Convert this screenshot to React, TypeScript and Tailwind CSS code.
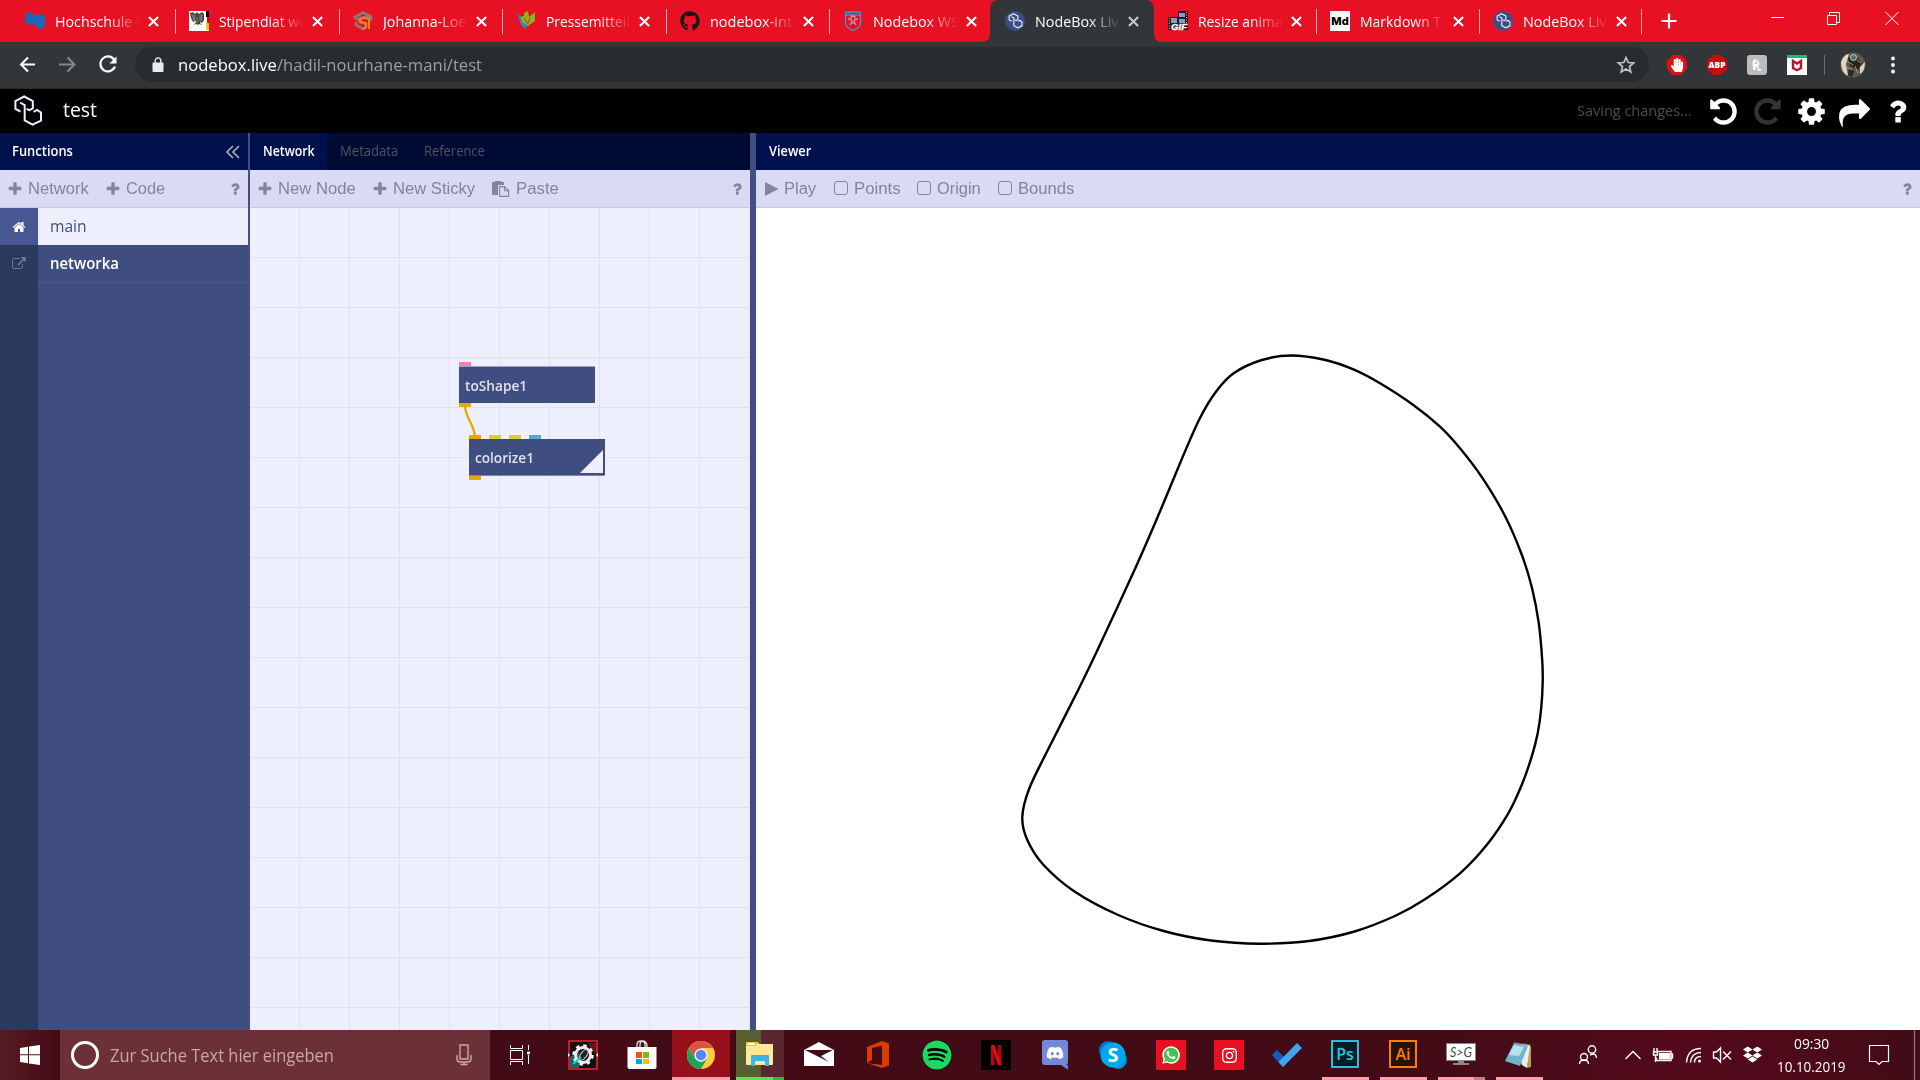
import React, { useLayoutEffect, useRef } from "react";
import { FaGithub, FaWhatsapp, FaInstagram, FaSpotify, FaDiscord, FaDropbox, FaHandPaper } from "react-icons/fa";

/* Text that is condensed or widened to fill a given width. */
function Fit({ w, className = "", children }: { w: number; className?: string; children: React.ReactNode }) {
  const ref = useRef<HTMLSpanElement>(null);
  useLayoutEffect(() => {
    const el = ref.current;
    if (el && el.offsetWidth) el.style.transform = `scaleX(${w / el.offsetWidth})`;
  }, [w]);
  return (
    <span className={`inline-block shrink-0 whitespace-nowrap text-left ${className}`} style={{ width: w }}>
      <span ref={ref} className="inline-block origin-left">{children}</span>
    </span>
  );
}

const glyphs = {
  undo: "M1664 896q0 156-61 298t-164 245-245 164-298 61q-172 0-327-72.5t-264-204.5q-7-10-6.5-22.5t8.5-20.5l137-138q10-9 25-9 16 2 23 12 73 95 179 147t225 52q104 0 198.5-40.5t163.5-109.5 109.5-163.5 40.5-198.5-40.5-198.5-109.5-163.5-163.5-109.5-198.5-40.5q-98 0-188 35.5t-160 101.5l137 138q31 30 14 69-17 40-59 40h-448q-26 0-45-19t-19-45v-448q0-42 40-59 39-17 69 14l130 129q107-101 244.5-156.5t284.5-55.5q156 0 298 61t245 164 164 245 61 298z",
  redo: "M1664 256v448q0 26-19 45t-45 19h-448q-42 0-59-40-17-39 14-69l138-138q-148-137-349-137-104 0-198.5 40.5t-163.5 109.5-109.5 163.5-40.5 198.5 40.5 198.5 109.5 163.5 163.5 109.5 198.5 40.5q119 0 225-52t179-147q7-10 23-12 15 0 25 9l137 138q9 8 9.5 20.5t-7.5 22.5q-109 132-264 204.5t-327 72.5q-156 0-298-61t-245-164-164-245-61-298 61-298 164-245 245-164 298-61q147 0 284.5 55.5t244.5 156.5l130-129q29-31 70-14 39 17 39 59z",
  cog: "M1152 896q0-106-75-181t-181-75-181 75-75 181 75 181 181 75 181-75 75-181zm512-109v222q0 12-8 23t-20 13l-185 28q-19 54-39 91 35 50 107 138 10 12 10 25t-9 23q-27 37-99 108t-94 71q-12 0-26-9l-138-108q-44 23-91 38-16 136-29 186-7 28-36 28h-222q-14 0-24.5-8.5t-11.5-21.5l-28-184q-49-16-90-37l-141 107q-10 9-25 9-14 0-25-11-126-114-165-168-7-10-7-23 0-12 8-23 15-21 51-66.5t54-70.5q-27-50-41-99l-183-27q-13-2-21-12.5t-8-23.5v-222q0-12 8-23t19-13l186-28q14-46 39-92-40-57-107-138-10-12-10-24 0-10 9-23 26-36 98.5-107.5t94.5-71.5q13 0 26 10l138 107q44-23 91-38 16-136 29-186 7-28 36-28h222q14 0 24.5 8.5t11.5 21.5l28 184q49 16 90 37l142-107q9-9 24-9 13 0 25 10 129 119 165 170 7 8 7 22 0 12-8 23-15 21-51 66.5t-54 70.5q26 50 41 98l183 28q13 2 21 12.5t8 23.5z",
  share: "M1792 640q0 26-19 45l-512 512q-19 19-45 19t-45-19-19-45v-256h-224q-98 0-175.5 6t-154 21.5-133 42.5-105.5 69.5-80 101-48.5 138.5-17.5 181q0 55 5 123 0 6 2.5 23.5t2.5 26.5q0 15-8.5 25t-23.5 10q-16 0-28-17-7-9-13-22t-13.5-30-10.5-24q-127-285-127-451 0-199 53-333 162-403 875-403h224v-256q0-26 19-45t45-19 45 19l512 512q19 19 19 45z",
  question: "M1088 1256v240q0 16-12 28t-28 12h-240q-16 0-28-12t-12-28v-240q0-16 12-28t28-12h240q16 0 28 12t12 28zm316-600q0 54-15.5 101t-35 76.5-55 59.5-57.5 43.5-61 35.5q-41 23-68.5 65t-27.5 67q0 17-12 32.5t-28 15.5h-240q-15 0-25.5-18.5t-10.5-37.5v-45q0-83 65-156.5t143-108.5q59-27 84-56t25-76q0-42-46.5-74t-107.5-32q-65 0-108 29-35 25-107 115-13 16-31 16-12 0-25-8l-164-125q-13-10-15.5-25t5.5-28q160-266 464-266 80 0 161 31t146 83 106 127.5 41 158.5z",
  plus: "M1600 736v192q0 40-28 68t-68 28h-416v416q0 40-28 68t-68 28h-192q-40 0-68-28t-28-68v-416h-416q-40 0-68-28t-28-68v-192q0-40 28-68t68-28h416v-416q0-40 28-68t68-28h192q40 0 68 28t28 68v416h416q40 0 68 28t28 68z",
  home: "M1472 992v480q0 26-19 45t-45 19h-384v-384h-256v384h-384q-26 0-45-19t-19-45v-480q0-1 .5-3t.5-3l575-474 575 474q1 2 1 6zm223-69l-62 74q-8 9-21 11h-3q-13 0-21-7l-692-577-692 577q-12 8-24 7-13-2-21-11l-62-74q-8-10-7-23.5t11-21.5l719-599q32-26 76-26t76 26l244 204v-195q0-14 9-23t23-9h192q14 0 23 9t9 23v408l219 182q10 8 11 21.5t-7 23.5z",
  external: "M1408 928v320q0 119-84.5 203.5t-203.5 84.5h-832q-119 0-203.5-84.5t-84.5-203.5v-832q0-119 84.5-203.5t203.5-84.5h704q14 0 23 9t9 23v64q0 14-9 23t-23 9h-704q-66 0-113 47t-47 113v832q0 66 47 113t113 47h832q66 0 113-47t47-113v-320q0-14 9-23t23-9h64q14 0 23 9t9 23zm384-864v512q0 26-19 45t-45 19-45-19l-176-176-652 652q-10 10-23 10t-23-10l-114-114q-10-10-10-23t10-23l652-652-176-176q-19-19-19-45t19-45 45-19h512q26 0 45 19t19 45z",
};

function Glyph({ name, className = "" }: { name: keyof typeof glyphs; className?: string }) {
  return (
    <svg viewBox="0 0 1792 1792" className={`shrink-0 ${className}`} fill="currentColor">
      <path d={glyphs[name]} />
    </svg>
  );
}

function NodeBoxMark({ className = "", width = 1.7 }: { className?: string; width?: number }) {
  return (
    <svg viewBox="0 0 30 32" className={className} fill="none" stroke="#eef" strokeWidth={width}>
      <path d="M7.500 16.500L2.400 14V6L11.200 1.500L19.800 6V13.500L16.500 15.200L13.500 13.800" />
      <path d="M7 7.500L11.700 10.200V25.500L19.500 29.700L28 25.600V17.500L24 15L20.500 17" />
    </svg>
  );
}

function NodeBoxIcon() {
  return (
    <div className="flex size-5 items-center justify-center rounded-full bg-[#3c4d86]">
      <NodeBoxMark className="h-4 w-[15px]" width={2.3} />
    </div>
  );
}

function Cross({ className = "text-white" }: { className?: string }) {
  return (
    <svg viewBox="0 0 11 11" className={`size-[11px] ${className}`} stroke="currentColor" strokeWidth="2.100">
      <path d="M.9.9l9.200 9.200M10.100.9L.9 10.100" />
    </svg>
  );
}

const favicons = {
  hochschule: (
    <svg viewBox="0 0 20 20" className="size-5" fill="#1b67b8">
      <path d="M0 3.500L4.500 1l5.500 3.500L16 2.500l4 2.500v10l-4.500 3.500-4-2v-3l-1.500-1v2l-3-1v-1l-2 1v1l-5-2.500z" />
    </svg>
  ),
  eagle: (
    <svg viewBox="0 0 20 20" className="size-5">
      <path fill="#fff" d="M0 0h20v20H0z" />
      <path d="M17 0h3v6h-3z" />
      <path fill="#d00" d="M18 6h2v6h-2z" />
      <path fill="#fc0" d="M17 12h3v7h-3z" />
      <path fill="#444" d="M1 2l3-1 2 2 2-2 2 2 3-2 2 2v6l-2 3-2-1v1l2 2-3-1-1 1-2-1-2 1 2-3v-1l-3 1-2-4z" />
      <path stroke="#bbb" strokeWidth=".6" d="M3 3l2 7M5.500 4v7M11 4v6M13 3l-1 7M8 6v6" />
    </svg>
  ),
  johanna: (
    <svg viewBox="0 0 20 20" className="size-5" fill="none" strokeWidth="2.600">
      <path stroke="#8d7b7b" d="M7 10L1.500 6.500 10 1.500l8 4v3L13 6 7 7v4l6 2v3l-3 2-7-4v-3" />
      <path stroke="#f58220" strokeWidth="2" d="M16 18V8l-5-1.500L7 9v2l6 1v4l-3 2" />
    </svg>
  ),
  press: (
    <svg viewBox="0 0 20 20" className="size-5">
      <path fill="#8db021" d="M3 6l5-1V2l4-2 1 6 6-5v9l-7 5-6-3z" />
      <path fill="#268bc4" d="M1 2l4 5 2 5 4 2-1 2 1 1-1 1-5-4z" />
      <path stroke="#d0331c" d="M8 7l4 6M14 7l-2 5" />
    </svg>
  ),
  github: <FaGithub className="size-5 text-[#1c1517]" />,
  shield: (
    <svg viewBox="0 0 20 20" className="size-5" fill="none" stroke="#4a90c8" strokeWidth="1.300">
      <path d="M2.500 1.500q7.500-1 15 0v10q0 5-7.500 8-7.500-3-7.500-8zM3 4h14" />
      <path stroke="#b9a1b5" d="M8 6q2-2 4 0v3l-1 1 2 4M8 6v3l1 1-2 4M5 8h2M13 8h2M9 12h2" />
    </svg>
  ),
  nodebox: <NodeBoxIcon />,
  gif: (
    <svg viewBox="0 0 20 20" className="size-5">
      <path fill="#301419" d="M0 6h10V0h10v19H0z" />
      <path fill="#7c9fd0" d="M3 7h6v5H3zM11 2h6v4h-6zM11 8h6v4h-6z" />
      <path stroke="#c9b3b3" strokeDasharray="1 1.500" d="M1.500 7v12M18.500 1v12" />
      <text x="3" y="18.500" textLength="16" lengthAdjust="spacingAndGlyphs" fontSize="8.500" fontWeight="900" fontStyle="italic" fill="#fff" stroke="#fff" strokeWidth=".4" fontFamily="Liberation Sans">GIF</text>
    </svg>
  ),
  md: <div className="flex size-5 items-center justify-center bg-white font-['Inter'] text-[11px] font-extrabold text-black">Md</div>,
};

const tabs: { icon: keyof typeof favicons; title: string; w: number; size: string; active?: boolean; sep?: boolean }[] = [
  { icon: "hochschule", title: "Hochschule M", w: 94, size: "w-[164px]", sep: true },
  { icon: "eagle", title: "Stipendiat we", w: 88, size: "w-[164px]", sep: true },
  { icon: "johanna", title: "Johanna-Loe", w: 83, size: "w-[163px]", sep: true },
  { icon: "press", title: "Pressemitteil", w: 84, size: "w-[164px]", sep: true },
  { icon: "github", title: "nodebox-int", w: 82, size: "w-[163px]", sep: true },
  { icon: "shield", title: "Nodebox WS", w: 86, size: "w-[162px]" },
  { icon: "nodebox", title: "NodeBox Liv", w: 84, size: "w-[163px]", active: true },
  { icon: "gif", title: "Resize anima", w: 85, size: "w-[162px]", sep: true },
  { icon: "md", title: "Markdown T", w: 81, size: "w-[163px]", sep: true },
  { icon: "nodebox", title: "NodeBox Liv", w: 84, size: "w-[162px]", sep: true },
];

function TabStrip() {
  return (
    <div className="flex h-[42px] bg-[#e81123] pl-[11px] text-white">
      {tabs.map((t, i) => (
        <div key={i} className={`relative flex shrink-0 items-center pl-[14px] ${t.size}`}>
          {t.active && (
            <svg viewBox="0 0 181 42" className="absolute -left-[10px] top-0 h-[42px] w-[181px]" fill="#323639">
              <path d="M0 42q9 0 9-8V9q0-9 9-9h146q9 0 9 9v25q0 8 8 8z" />
            </svg>
          )}
          <div className="relative flex items-center">
            {favicons[t.icon]}
            <div className="ml-[10px] w-[85px] overflow-hidden [mask-image:linear-gradient(to_right,#000_62%,transparent)]">
              <Fit w={t.w} className="text-[15px] leading-5">{t.title}</Fit>
            </div>
            <div className="ml-2"><Cross className={t.active ? "text-[#c6c8ca]" : "text-white"} /></div>
          </div>
          {t.sep && <div className="absolute -right-px top-[9px] h-[25px] w-px bg-[#f9b0b6]" />}
        </div>
      ))}
      <svg viewBox="0 0 280 42" className="h-[42px] w-[280px] shrink-0" fill="none" stroke="#fff">
        <path strokeWidth="2.200" d="M20.500 21h15M28 13.500v15" />
        <path d="M130 17.500h13M186.500 15.500h9v9h-9zM188.500 15v-2.500h10v10H196M244.500 12l13 13M257.500 12l-13 13" />
      </svg>
    </div>
  );
}

function AddressBar() {
  return (
    <div className="flex h-[47px] items-center border-b border-[#26292b] bg-[#323639] pb-px">
      <svg viewBox="0 0 135 46" className="h-[46px] w-[135px] shrink-0" fill="none" strokeWidth="2">
        <path stroke="#fff" d="M35 22.500H21M28 15.500l-7 7 7 7" />
        <path stroke="#84878a" d="M59 22.500h15M67.500 15.500l7 7-7 7" />
        <path stroke="#fff" strokeWidth="2.200" d="M114 17.500a7.500 7.500 0 1 0 1 7" />
        <path fill="#fff" d="M116.500 14.500v7h-7z" />
      </svg>
      <div className="flex h-[35px] w-[1514px] shrink-0 items-center rounded-full bg-[#282c2f] pl-[17px] pr-[13px]">
        <svg viewBox="0 0 12 16" className="h-4 w-3" fill="#e8eaed">
          <path d="M1.500 5.500h9q1 0 1 1V14q0 1-1 1h-9q-1 0-1-1V6.500q0-1 1-1z" />
          <path d="M3.200 6V3.700a2.800 2.800 0 0 1 5.600 0V6" fill="none" stroke="#e8eaed" strokeWidth="1.400" />
        </svg>
        <Fit w={304} className="ml-[14px] text-[17px] leading-6 text-[#9aa0a6]"><span className="text-white">nodebox.live</span>/hadil-nourhane-mani/test</Fit>
        <svg viewBox="0 0 20 20" className="ml-auto size-5" fill="none" stroke="#c0c3c6" strokeWidth="1.700">
          <path d="M10 2.500l2.200 5 5.500.5-4.200 3.600 1.300 5.400-4.800-2.900L5.200 17l1.300-5.400L2.300 8l5.500-.5z" />
        </svg>
      </div>
      <div className="flex items-center gap-5 pl-[18px]">
        <svg viewBox="0 0 20 20" className="size-5"><path fill="#e01010" d="M6 0h8l6 6v8l-6 6H6l-6-6V6z" /><foreignObject x="3" y="3" width="14" height="14"><FaHandPaper className="size-[14px] text-white" /></foreignObject></svg>
        <svg viewBox="0 0 20 20" className="size-5"><path fill="#c70d0d" d="M6 0h8l6 6v8l-6 6H6l-6-6V6z" /><text x="10" y="13.400" textAnchor="middle" textLength="17" lengthAdjust="spacingAndGlyphs" fontSize="9" fontWeight="800" fill="#fff" fontFamily="Open Sans">ABP</text></svg>
        <svg viewBox="0 0 20 20" className="size-5"><rect width="20" height="20" rx="3" fill="#bdbdbd" /><path d="M5.500 8q3.500-.5 3-3-2-.5-2 3l.5 7M5.500 10.500l7-1.500M7.500 15q1-5 3-4.500 1 .500.5 3 0 2.500 3 1M10.500 5l.5 5" fill="none" stroke="#fff" strokeWidth="1.500" /></svg>
        <svg viewBox="0 0 20 20" className="size-5"><path fill="#fff" d="M0 1h20v19H0z" /><path fill="#15c26b" d="M0 0h20v3H0z" /><path fill="none" stroke="#b3162a" strokeWidth="2.400" d="M6 6v7l4 2.200 4-2.200V6l-4 2.500z" /></svg>
      </div>
      <div className="ml-[17px] h-5 w-px bg-[#6c6f72]" />
      <svg viewBox="0 0 26 26" className="ml-[15px] size-[26px]">
        <circle cx="13" cy="13" r="12.500" fill="#61594c" />
        <path fill="#ddd5c5" d="M1 10q3-8 8-8L6 12l2 12Q1 21 1 10zM20 15l5-5q0 9-5 12z" />
        <path fill="#28241f" d="M8 6l7-3 7 8-4 7-8-4zM9 16l5 3-2 6-4-2z" />
        <circle cx="13.500" cy="5.500" r="3" fill="#40776f" stroke="#ccc" />
        <path stroke="#a99b83" d="M5 14l7 4M15 14l3 7M7 9l6 4M17 8l4 3" />
      </svg>
      <svg viewBox="0 0 4 18" className="ml-[25px] h-[18px] w-1" fill="#fff"><circle cx="2" cy="2.500" r="1.900" /><circle cx="2" cy="9" r="1.900" /><circle cx="2" cy="15.500" r="1.900" /></svg>
    </div>
  );
}

function AppHeader() {
  return (
    <div className="flex h-11 items-center bg-black pl-[13px]">
      <NodeBoxMark className="h-8 w-[30px]" width={2} />
      <Fit w={34} className="mb-[2px] ml-5 text-[20px] font-medium leading-7 text-white">test</Fit>
      <div className="ml-auto flex items-center pr-[7px] text-white">
        <Fit w={115} className="mb-[2px] mr-4 text-[15px] font-medium leading-5 text-[#4c4c4c]">Saving changes...</Fit>
        <Glyph name="undo" className="size-[31px]" />
        <Glyph name="redo" className="ml-[13px] size-[31px] text-[#333]" />
        <Glyph name="cog" className="ml-[13px] size-[31px]" />
        <Glyph name="share" className="ml-[12px] mt-1 size-[31px]" />
        <Glyph name="question" className="ml-[12px] size-[31px]" />
      </div>
    </div>
  );
}

const header = "flex h-[37px] shrink-0 items-center font-semibold text-[14px] leading-5 text-white";
const toolbar = "flex h-[38px] shrink-0 items-center border-b border-[#c8c5ec] bg-[#dadaf4] font-['Liberation_Sans'] text-[16px] leading-5 text-[#8283a0]";

function ToolButton({ label, w, className = "" }: { label: string; w: number; className?: string }) {
  return (
    <div className={`flex items-center ${className}`}>
      <Glyph name="plus" className="mr-[5px] size-4" />
      <Fit w={w}>{label}</Fit>
    </div>
  );
}

function FunctionsPanel() {
  return (
    <section className="flex w-[248px] shrink-0 flex-col">
      <div className={`${header} justify-between bg-[#00114d] pl-[12px] pr-[8px]`}>
        <Fit w={61} className="mb-[2px]">Functions</Fit>
        <svg viewBox="0 0 14 14" className="size-[14px]" fill="none" stroke="#a9a9b4" strokeWidth="1.700"><path d="M7 1L1 7l6 6M13 1L7 7l6 6" /></svg>
      </div>
      <div className={`${toolbar} pl-[7px]`}>
        <ToolButton label="Network" w={61} />
        <ToolButton label="Code" w={39} className="ml-4" />
        <Glyph name="question" className="ml-auto mr-[5px] size-4" />
      </div>
      <div className="flex flex-1 bg-[#404d80]">
        <div className="flex w-[38px] flex-col bg-[#2c395f] text-white">
          <div className="flex h-[37px] items-center justify-center bg-[#475792]"><Glyph name="home" className="size-[14px]" /></div>
          <div className="flex h-[37px] items-center justify-center text-[#6b7596]"><Glyph name="external" className="size-[14px]" /></div>
        </div>
        <div className="flex-1 text-[16px] leading-6">
          <div className="flex h-[37px] items-center bg-[#edf0fc] pb-[2px] pl-[12px] text-[#404d80]"><Fit w={37}>main</Fit></div>
          <div className="flex h-[38px] items-center border-b border-[#475792] pb-[2px] pl-[12px] font-semibold text-white"><Fit w={69}>networka</Fit></div>
        </div>
      </div>
    </section>
  );
}

function Port({ className }: { className: string }) {
  return <div className={`absolute h-1 w-3 ${className}`} />;
}

function NetworkPanel() {
  return (
    <section className="flex w-[500px] shrink-0 flex-col">
      <div className={`${header} bg-[#000b33]`}>
        <div className="flex h-full w-[77px] items-center bg-[#00114d] pb-[2px] pl-[13px]"><Fit w={52}>Network</Fit></div>
        <Fit w={58} className="mb-[2px] ml-[13px] font-normal text-[#50535f]">Metadata</Fit>
        <Fit w={61} className="mb-[2px] ml-[26px] font-normal text-[#50535f]">Reference</Fit>
      </div>
      <div className={`${toolbar} pl-[7px]`}>
        <ToolButton label="New Node" w={78} />
        <ToolButton label="New Sticky" w={82} className="ml-4" />
        <svg viewBox="0 0 18 16" className="ml-[17px] mr-[6px] h-4 w-[18px]" fill="currentColor">
          <path d="M0 1h3V0h6v1h3v3H6v10H0z" />
          <path d="M7.600 5.600h5l4 4v5.800h-9zM12.500 6v3.800h4" fill="#dadaf4" stroke="currentColor" strokeWidth="1.100" />
        </svg>
        <Fit w={43}>Paste</Fit>
        <Glyph name="question" className="ml-auto mr-[5px] size-4" />
      </div>
      <div className="relative flex-1 bg-[#edf0fc] bg-[linear-gradient(to_right,transparent_49px,#dfe2ee_49px),linear-gradient(to_bottom,transparent_49px,#dfe2ee_49px)] bg-[size:50px_50px]">
        <div className="absolute left-[209px] top-[158px] flex h-[37px] w-[136px] items-center border-t border-[#9ba2c2] bg-[#404d80] pl-[6px] text-[15px] font-semibold leading-5 text-[#e0e3ec]">
          <Fit w={62}>toShape1</Fit>
          <Port className="-top-[5px] left-0 bg-[#f17fb2]" />
          <Port className="-bottom-1 left-0 bg-[#e8a900]" />
        </div>
        <div className="absolute left-[219px] top-[231px] flex h-[37px] w-[136px] items-center border-b border-[#7a83a9] bg-[#404d80] pl-[6px] text-[15px] font-semibold leading-5 text-[#e0e3ec]">
          <Fit w={59}>colorize1</Fit>
          <Port className="-top-1 left-0 bg-[#e8a900]" />
          <Port className="-top-1 left-5 bg-[#dccb3c]" />
          <Port className="-top-1 left-10 bg-[#dccb3c]" />
          <Port className="-top-1 left-[60px] bg-[#5aa5df]" />
          <Port className="-bottom-[5px] left-0 bg-[#e8a900]" />
          <svg viewBox="0 0 23 23" className="absolute bottom-[2px] right-[2px] size-[23px]"><path fill="#edf0fc" d="M23 0v23H0z" /></svg>
        </div>
        <svg viewBox="0 0 20 34" className="absolute left-[210px] top-[197px] h-[34px] w-5" fill="none" stroke="#e8a900" strokeWidth="2.400"><path d="M5 0C5 14 15 19 15 33" /></svg>
      </div>
    </section>
  );
}

/* Outline vertices in window coordinates, in drawing order. */
const outline: [number, number][] = [
  [1291, 355.5], [1261.8, 360], [1234, 373], [1216.5, 391], [1200, 418], [1181.8, 459], [1158.9, 514], [1134.500, 570], [1097.500, 650],
  [1078.2, 690], [1047.3, 751], [1029.1, 789], [1022.3, 817], [1027.3, 840], [1043.6, 865], [1074.5, 891.5], [1118.2, 915], [1163.6, 931],
  [1210.9, 940.5], [1260, 943.7], [1309.1, 941], [1354.5, 931.5], [1396, 915.500], [1425, 899.3], [1460, 873.3], [1486.7, 845], [1508.3, 813.3],
  [1521.7, 785], [1531.7, 756.7], [1537.7, 733.3], [1541.2, 708.3], [1542.7, 681.7], [1542.2, 660], [1538.8, 623.3], [1532, 588],
  [1521.7, 554.5], [1505, 516], [1482.2, 477.7], [1460, 448.3], [1440, 426.7], [1413.3, 405], [1380, 383.3], [1354, 369.700], [1325.5, 360],
];

function smoothPath(pts: [number, number][]) {
  const n = pts.length;
  let d = `M${pts[0][0]} ${pts[0][1]}`;
  for (let i = 0; i < n; i++) {
    const a = pts[(i + n - 1) % n], b = pts[i], c = pts[(i + 1) % n], e = pts[(i + 2) % n];
    d += `C${b[0] + (c[0] - a[0]) / 6} ${b[1] + (c[1] - a[1]) / 6} ${c[0] - (e[0] - b[0]) / 6} ${c[1] - (e[1] - b[1]) / 6} ${c[0]} ${c[1]}`;
  }
  return d + "Z";
}

function Check({ label, w, className = "" }: { label: string; w: number; className?: string }) {
  return (
    <div className={`flex items-center ${className}`}>
      <div className="mb-px mr-[6px] size-[14px] rounded-[3px] border border-[#8283a0]" />
      <Fit w={w}>{label}</Fit>
    </div>
  );
}

function ViewerPanel() {
  return (
    <section className="flex flex-1 flex-col">
      <div className={`${header} bg-[#00114d] pl-[13px]`}><Fit w={42} className="mb-[2px]">Viewer</Fit></div>
      <div className={`${toolbar} pl-[9px]`}>
        <svg viewBox="0 0 14 14" className="mr-[5px] size-[14px]" fill="currentColor"><path d="M0 0l13.500 7L0 14z" /></svg>
        <Fit w={32}>Play</Fit>
        <Check label="Points" w={46} className="ml-[18px]" />
        <Check label="Origin" w={44} className="ml-[17px]" />
        <Check label="Bounds" w={56} className="ml-[17px]" />
        <Glyph name="question" className="ml-auto mr-[5px] size-4" />
      </div>
      <div className="flex-1 bg-white">
        <svg viewBox="756 208 1164 822" className="h-[822px] w-[1164px]" fill="none" stroke="#000" strokeWidth="2.400"><path d={smoothPath(outline)} /></svg>
      </div>
    </section>
  );
}

const apps: { slot: string; on?: boolean; art: React.ReactNode }[] = [
  { slot: "w-[58px]", art: (
    <svg viewBox="0 0 30 30" className="size-[30px]">
      <path fill="#111" stroke="#c61b2c" strokeWidth="2" d="M1 1h28v28H1z" />
      <path d="M2 17l9-5v16H2z" fill="#0f8f88" opacity=".7" />
      <path d="M19 3h9v12z" fill="#8f1420" opacity=".7" />
      <circle cx="15" cy="15" r="7.500" fill="none" stroke="#f4e6e6" strokeWidth="3" />
      <circle cx="15" cy="15" r="9.500" fill="none" stroke="#fff" strokeWidth="2.500" strokeDasharray="3.500 3.960" />
      <ellipse cx="15.500" cy="14.500" rx="3" ry="6" transform="rotate(35 15 15)" fill="#222" stroke="#ddd" />
      <path stroke="#1bd0c0" strokeWidth="2" d="M5 24l8-7" />
      <path fill="#fff" d="M0 13l2 2-2 2zM30 13l-2 2 2 2z" />
    </svg>) },
  { slot: "w-[60px]", art: (
    <svg viewBox="0 0 30 30" className="size-[30px]">
      <path d="M10 8V5q0-4 4-4t4 4v3M13 8V5q0-4 3-4t4 4v3" fill="none" stroke="#ddd" strokeWidth="1.400" />
      <path fill="#fff" d="M.5 7h29v20q0 2-2 2h-25q-2 0-2-2z" />
      <path fill="#f25022" d="M9 12h6v6H9z" /><path fill="#7fba00" d="M16 12h6v6h-6z" /><path fill="#00a4ef" d="M9 19h6v5H9z" /><path fill="#ffb900" d="M16 19h6v5h-6z" />
    </svg>) },
  { slot: "w-[58px] bg-[#970f1b]", art: (
    <svg viewBox="0 0 28 28" className="size-7">
      <circle cx="14" cy="14" r="14" fill="#ffcd40" />
      <path fill="#de5145" d="M1.900 7A14 14 0 0 1 26.100 7H14l-6 10.500z" />
      <path fill="#1aa260" d="M1.900 7A14 14 0 0 0 14 28l6-10.500-6 3.500-6-3.500z" />
      <circle cx="14" cy="14" r="6.600" fill="#f1f1f1" /><circle cx="14" cy="14" r="5.200" fill="#4c8bf5" />
    </svg>) },
  { slot: "w-[60px]", art: (
    <div className="flex h-full w-12 items-center justify-center bg-[linear-gradient(to_right,#575f30_25px,#5a262f_25px)]">
      <svg viewBox="0 0 28 24" className="mb-[2px] h-6 w-7">
        <path fill="#f5c430" d="M0 0h12l2 3h13v19H0z" /><path fill="#fff" d="M2 1h7v2H2z" /><path fill="#ffe896" d="M0 4h9l3-2h15v20q0 1-1 1H1q-1 0-1-1z" />
        <path fill="#3eb3e6" d="M5 24V14q0-1 1-1h16q1 0 1 1v10h-4v-5H9v5z" />
      </svg>
    </div>) },
  { slot: "w-[58px]", art: (
    <svg viewBox="0 0 30 24" className="mb-[2px] h-6 w-[30px]"><path fill="#fff" d="M0 8L15 0l15 8v16H0z" /><path fill="#430b16" d="M1 8h28l-12 6 8 6z" /></svg>) },
  { slot: "w-[59px]", art: (
    <svg viewBox="0 0 24 28" className="h-7 w-6"><path fill="#dc3c00" fillRule="evenodd" d="M1 6L16 0l7 2.500v22L16 27 1 22l15 2V4.500L6 7v12l-5 3z" /></svg>) },
  { slot: "w-[59px]", art: <div className="rounded-full bg-black"><FaSpotify className="size-[30px] text-[#1ed760]" /></div> },
  { slot: "w-[60px]", art: (
    <svg viewBox="0 0 30 30" className="size-[30px]"><path d="M0 0h30v30H0z" /><path fill="#b1060f" d="M10 5h3.500v20L10 25.500zM17 5h3.500v20.500L17 25z" /><path fill="#e50914" d="M10 5h3.500l7 20.500L17 25z" /></svg>) },
  { slot: "w-[58px]", art: (
    <div className="relative flex h-[30px] w-[26px] flex-col">
      <div className="flex h-[26px] items-center justify-center rounded-[3px] bg-[#7289da]"><FaDiscord className="size-[18px] text-white" /></div>
      <svg viewBox="0 0 8 5" className="ml-auto h-[5px] w-2"><path fill="#7289da" d="M1 0h7v5z" /></svg>
    </div>) },
  { slot: "w-[58px]", art: (
    <svg viewBox="0 0 28 28" className="size-7"><circle cx="9" cy="9" r="9" fill="#0078d4" /><circle cx="19" cy="19" r="9" fill="#0091e0" /><circle cx="14" cy="14" r="12.500" fill="#00a9ee" /><text x="14" y="21" textAnchor="middle" fill="#fff" fontSize="20" fontWeight="700" fontFamily="Open Sans">S</text></svg>) },
  { slot: "w-[58px]", art: <div className="flex size-[30px] items-center justify-center bg-[#e81123]"><div className="flex size-[17px] items-center justify-center rounded-full bg-[#40c351]"><FaWhatsapp className="size-[20px] shrink-0 text-white" /></div></div> },
  { slot: "w-[58px]", art: <div className="flex size-[30px] items-center justify-center bg-[#e81123]"><FaInstagram className="size-[17px] text-white" /></div> },
  { slot: "w-[58px]", art: (
    <svg viewBox="0 0 30 24" className="h-6 w-[30px]"><path fill="#185abd" d="M0 12l5-5 11 11-5 6z" /><path fill="#41a5ee" d="M11 24l-4.500-5L25 0l5 5z" /></svg>) },
  { slot: "w-[58px]", on: true, art: <div className="mb-[3px] flex size-7 items-center justify-center border-2 border-[#26c2d9] bg-[#001d26] text-[16px] font-semibold leading-none text-[#26c9e0]">Ps</div> },
  { slot: "w-[58px]", on: true, art: <div className="mb-[3px] flex size-7 items-center justify-center border-2 border-[#ff7c00] bg-[#261300] text-[16px] font-semibold leading-none text-[#ff7c00]">Ai</div> },
  { slot: "w-[58px]", on: true, art: (
    <svg viewBox="0 0 30 24" className="mb-[2px] h-6 w-[30px]"><path fill="#fff" stroke="#888" d="M.5 1.500h29v17H.5z" /><path fill="#888" d="M12 19h6v2h5v2H7v-2h5z" /><text x="15" y="14.500" textAnchor="middle" textLength="22" lengthAdjust="spacingAndGlyphs" fontSize="12.500" fontStyle="italic" fill="#444" fontFamily="Lato">S&gt;G</text></svg>) },
  { slot: "w-[58px]", on: true, art: (
    <svg viewBox="0 0 28 28" className="size-7"><path fill="#c59b45" d="M24 4l2 1v21l-4 1z" /><path fill="#e8f0f2" d="M9 2l16 2-3 23-5-3z" /><path fill="#6fb6cb" d="M9 2l14 3-8 20L0 20z" /><path fill="#b8e2ec" d="M9 4l10 2-5 9-10-1z" /><path stroke="#777" strokeWidth="2" strokeDasharray="1 1.500" d="M9 2l16 2" /></svg>) },
];

function Taskbar() {
  return (
    <div className="flex h-[50px] bg-[linear-gradient(to_right,#551b21_0px,#430b16_60px,#430b16_1440px,#530a1b_1680px,#500a1a_1780px,#430b16_1900px)]">
      <div className="flex w-[60px] items-center justify-center">
        <svg viewBox="0 0 20 20" className="size-5" fill="#fff"><path d="M0 3l8-1.200V9.300H0zM9 1.600L20 0v9.300H9zM0 10.300h8v8L0 17zM9 10.300h11V20L9 18.400z" /></svg>
      </div>
      <div className="flex w-[430px] items-center bg-[#6b3137] pl-[11px] pr-[18px]">
        <div className="size-7 rounded-full border-[3.500px] border-white" />
        <Fit w={224} className="ml-[11px] text-[17.500px] leading-6 text-[#cba6a8]">Zur Suche Text hier eingeben</Fit>
        <svg viewBox="0 0 16 22" className="ml-auto h-[22px] w-4" fill="none" stroke="#cba6a8" strokeWidth="1.400"><path d="M4 1h8v14H4zM1 11v4q0 3 3 3h8q3 0 3-3v-4M8 18v3M4.500 20.500h7" /></svg>
      </div>
      <div className="flex w-16 items-center pl-5">
        <svg viewBox="0 0 20 20" className="size-5" fill="none" stroke="#fff"><path d="M.5 0v3.500h12V0M.5 5.500h12v9H.5zM.5 20v-3.500h12V20M18.500 0v5M18.500 10v9" /><path fill="#fff" d="M17.500 7h2v2h-2z" /></svg>
      </div>
      {apps.map((a, i) => (
        <div key={i} className={`relative flex shrink-0 items-center justify-center ${a.slot}`}>
          {a.art}
          {i === 2 && <div className="absolute inset-x-0 bottom-0 h-[3px] bg-[#ff9fae]" />}
          {i === 3 && <div className="absolute bottom-0 left-[6px] flex h-[3px] w-12 bg-[#3eb32f]"><div className="w-[37px] bg-[#55e83d]" /></div>}
          {a.on && <div className="absolute bottom-0 left-[6px] h-[3px] w-[47px] bg-[#ff9fae]">{i === 15 && <div className="ml-auto h-full w-[11px] bg-[#c98088]" />}</div>}
        </div>
      ))}
      <svg viewBox="1548 1030 225 50" className="w-[225px] shrink-0" fill="none" stroke="#fff" strokeWidth="1.400">
        <circle cx="1592" cy="1049.500" r="3.700" /><circle cx="1584" cy="1057" r="3.500" />
        <path d="M1579.500 1064q0-4 4.500-4t4.500 4M1590 1055q6-3 6.500 3" />
        <path d="M1625.500 1059l7.500-7.500 7.500 7.500" />
        <path d="M1657 1051.500h14v9h-14.500v-3M1671 1054h1.500v4H1671M1653.500 1052h4v3h-4zM1654 1048v4M1657 1048v4M1655.500 1055v7" />
        <path d="M1659 1053h11v6.500h-11z" fill="#fff" stroke="none" />
        <path d="M1686.500 1062.500q1-14 14.500-14M1690.500 1062.500q1-10 10.500-10M1694.500 1062.500q0-6 6.500-6" /><circle cx="1699.500" cy="1061" r="1.500" fill="#fff" stroke="none" />
        <path d="M1713.500 1052h3l4-4v14l-4-4h-3zM1723 1051.500l8 8M1731 1051.500l-8 8" />
        <foreignObject x="1743" y="1045" width="19" height="19"><FaDropbox className="size-[19px] text-white" /></foreignObject>
      </svg>
      <div className="flex w-[76px] shrink-0 flex-col items-center gap-[3px] pt-[3px] text-[15px] leading-5 text-white">
        <Fit w={35}>09:30</Fit>
        <Fit w={69}>10.10.2019</Fit>
      </div>
      <svg viewBox="0 0 71 50" className="w-[71px] shrink-0" fill="none" stroke="#fff" strokeWidth="1.200"><path d="M20.500 15.500h19v16h-6.500l-3 3-3-3h-6.500z" /><path stroke="#a07780" d="M65.500 0v50" /></svg>
    </div>
  );
}

export default function App() {
  return (
    <div className="flex h-[1080px] w-[1920px] flex-col overflow-hidden font-['Open_Sans','Noto_Sans',sans-serif]">
      <TabStrip />
      <AddressBar />
      <AppHeader />
      <main className="flex min-h-0 flex-1 bg-[#434f83]">
        <FunctionsPanel />
        <div className="w-[2px] shrink-0" />
        <NetworkPanel />
        <div className="w-[6px] shrink-0" />
        <ViewerPanel />
      </main>
      <Taskbar />
    </div>
  );
}
